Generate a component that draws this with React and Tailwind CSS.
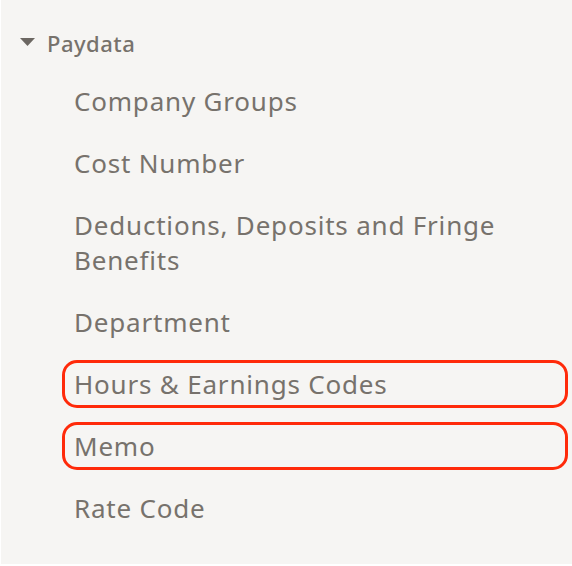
import React from "react";

const items = [
  { label: "Company Groups" },
  { label: "Cost Number" },
  { label: "Deductions, Deposits and Fringe Benefits" },
  { label: "Department" },
  { label: "Hours & Earnings Codes", marked: true },
  { label: "Memo", marked: true },
  { label: "Rate Code" },
];

const App = () => {
  return (
    <div
      className="w-[572px] h-[566px] bg-[#f6f5f3] border-l border-b-2 border-white text-[#77726c] overflow-hidden"
      style={{ fontFamily: "'Noto Sans', sans-serif" }}
    >
      <div className="flex items-center pl-[19px] pt-[28px] h-[58px]">
        <svg width="15" height="8" viewBox="0 0 15 8" className="mr-[12px] mt-[-2px]">
          <path d="M0 0 H15 L7.5 8 Z" fill="#6c6762" />
        </svg>
        <span className="text-[22px] font-medium leading-[28px] tracking-[0.5px]">Paydata</span>
      </div>

      <ul className="ml-[61px] w-[506px] mt-[19px] flex flex-col gap-[14px]">
        {items.map((item) => (
          <li
            key={item.label}
            className={`border-[3px] rounded-[15px] pl-[9px] pr-2 py-[3.5px] text-[26px] leading-[35px] tracking-[0.8px] ${
              item.marked ? "border-[#ff2a0a]" : "border-transparent"
            }`}
          >
            {item.label}
          </li>
        ))}
      </ul>
    </div>
  );
};

export default App;
